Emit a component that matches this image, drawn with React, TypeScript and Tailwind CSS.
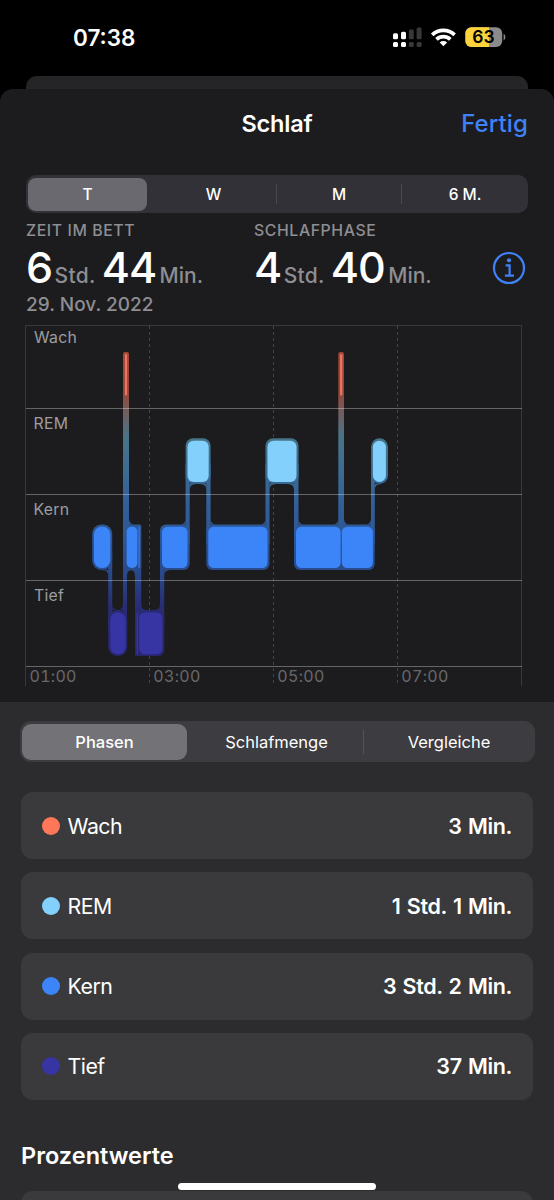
import React from "react";
import clsx from "clsx";

const blocks = [
  { x: 94, w: 16.3, y: 526.7, h: 41.3, r: 7.5, fill: "#3c85f8" },
  { x: 126.7, w: 10.6, y: 526.7, h: 41.3, r: 4.8, fill: "#3c85f8" },
  { x: 138.3, w: 1.7, y: 526.7, h: 41.3, r: 0.8, fill: "#3470d4" },
  { x: 162, w: 25.5, y: 526.7, h: 41.3, r: 5.5, fill: "#3c85f8" },
  { x: 208.3, w: 59.2, y: 526.7, h: 41.3, r: 5.5, fill: "#3c85f8" },
  { x: 296, w: 44.6, y: 526.7, h: 41.3, r: 5.5, fill: "#3c85f8" },
  { x: 341.9, w: 31, y: 526.7, h: 41.3, r: 5.5, fill: "#3c85f8" },
  { x: 187.5, w: 21.2, y: 440.7, h: 41.3, r: 6, fill: "#83d0fc" },
  { x: 267.5, w: 29, y: 440.7, h: 41.3, r: 6, fill: "#83d0fc" },
  { x: 372.9, w: 13, y: 440.7, h: 41.3, r: 6.5, fill: "#83d0fc" },
  { x: 110.3, w: 15.2, y: 612.5, h: 41.8, r: 7.2, fill: "#3734a3" },
  { x: 136.6, w: 1.4, y: 612.5, h: 41.8, r: 0.7, fill: "#3734a3" },
  { x: 139.2, w: 23.1, y: 612.5, h: 41.8, r: 5.5, fill: "#3734a3" },
  { x: 124.9, w: 2.2, y: 354, h: 41.5, r: 1, fill: "#ea7661" },
  { x: 340.1, w: 2.2, y: 354, h: 41.5, r: 1, fill: "#ea7661" },
];

// halo behind every block: x, y, width, height, radius
const halos = [
  [92.2, 524.5, 20, 45.5, 9],
  [123, 524.5, 18.3, 45.5, 2],
  [160, 524.5, 29.7, 45.5, 6],
  [206.3, 524.5, 63.2, 45.5, 6],
  [294, 524.5, 80.7, 45.5, 6],
  [185.6, 438.3, 25, 45.7, 7.5],
  [265.5, 438.3, 33, 45.7, 7.5],
  [371, 438.3, 17, 45.7, 8.5],
  [108.2, 610, 19, 46, 9],
  [135, 610, 29.2, 46, 6],
  [135, 610, 6, 46, 1],
];

// vertical bands between phases: x, top, width, bottom
const links = [
  [108.2, 550, 4, 632],
  [123, 352, 6, 550],
  [123, 540, 4, 632],
  [135, 550, 6.2, 640],
  [160, 550, 4.2, 632],
  [185.6, 462, 4.1, 545],
  [206.3, 462, 4.3, 545],
  [265.5, 462, 4, 545],
  [294, 462, 4.5, 545],
  [338.3, 352, 5.7, 545],
  [371, 462, 3.8, 545],
];

// inner corners: x, y, direction x, direction y
const fillets = [
  [108.2, 570, -1, 1],
  [112.2, 610, 1, -1],
  [123, 610, -1, -1],
  [127, 570, 0.8, 1],
  [135, 570, -0.8, 1],
  [129, 524.5, 1, -1],
  [141.2, 610, 1, -1],
  [160, 610, -1, -1],
  [164.2, 570, 1, 1],
  [185.6, 524.5, -1, -1],
  [189.7, 484, 1, 1],
  [206.3, 484, -1, 1],
  [210.6, 524.5, 1, -1],
  [265.5, 524.5, -1, -1],
  [269.5, 484, 1, 1],
  [294, 484, -1, 1],
  [298.5, 524.5, 1, -1],
  [338.3, 524.5, -1, -1],
  [344, 524.5, 1, -1],
  [371, 524.5, -1, -1],
  [374.8, 484, 1, 1],
];

const phases = [
  { name: "Wach", value: "3 Min.", dot: "bg-[#ff7759]" },
  { name: "REM", value: "1 Std. 1 Min.", dot: "bg-[#83d0fc]" },
  { name: "Kern", value: "3 Std. 2 Min.", dot: "bg-[#3c85f8]" },
  { name: "Tief", value: "37 Min.", dot: "bg-[#3734a3]" },
];

const StatusBar = () => (
  <div className="flex h-[76px] items-start justify-between pl-[73px] pr-[48px] pt-[22px]">
    <span className="text-[22.5px] font-semibold leading-8">07:38</span>
    <svg width="114" height="24" viewBox="392 25 114 24" className="mt-[3px]">
      <g fill="#fff">
        <rect x="393" y="42" width="5" height="5" rx="1.5" />
        <rect x="401" y="42" width="5" height="5" rx="1.5" />
        <rect x="393" y="33.3" width="5" height="6" rx="1.5" />
        <rect x="401" y="31.7" width="5" height="7.6" rx="1.5" />
      </g>
      <g fill="#38383a">
        <rect x="408.8" y="42" width="5" height="5" rx="1.5" />
        <rect x="416.6" y="42" width="5" height="5" rx="1.5" />
        <rect x="408.8" y="29.6" width="5" height="9.7" rx="1.5" />
        <rect x="416.6" y="27.5" width="5" height="11.8" rx="1.5" />
      </g>
      <g fill="none" stroke="#fff" strokeWidth="3.7">
        <path d="M432.2 34.9 A16 16 0 0 1 454.6 34.9" />
        <path d="M436.5 39.4 A10 10 0 0 1 450.3 39.4" />
      </g>
      <path d="M439.7 42.5 A5.4 5.4 0 0 1 447.1 42.5 L443.4 46.2 Z" fill="#fff" />
      <clipPath id="battery">
        <rect x="465.4" y="27.3" width="36.8" height="19.7" rx="6" />
      </clipPath>
      <g clipPath="url(#battery)">
        <rect x="465" y="27" width="38" height="21" fill="#8b8b8d" />
        <rect x="465" y="27" width="24" height="21" fill="#fdd33b" />
      </g>
      <path d="M503.6 33.8 Q505.4 34.8 505.4 37.2 Q505.4 39.6 503.6 40.6 Z" fill="#8b8b8d" />
      <text x="483.4" y="43.4" textAnchor="middle" fontSize="17.5" fontWeight="600" fill="#000">
        63
      </text>
    </svg>
  </div>
);

const Metric = ({ label, hours, minutes }: { label: string; hours: string; minutes: string }) => (
  <div className="w-[228px] whitespace-nowrap">
    <div className="text-[15.8px] font-medium leading-5 tracking-[0.6px] text-[#8e8e93]">{label}</div>
    <div className="flex h-[53px] items-baseline leading-[53px]">
      <span className="text-[43px] font-medium tracking-[-1px]">{hours}</span>
      <span className="ml-[2.5px] text-[21px] font-medium tracking-[0.3px] text-[#8e8e93]">Std.</span>
      <span className="ml-[6px] text-[43px] font-medium tracking-[-1px]">{minutes}</span>
      <span className="ml-[3.5px] text-[21px] font-medium text-[#8e8e93]">Min.</span>
    </div>
  </div>
);

const SleepChart = () => (
  <svg width="554" height="388" viewBox="0 314 554 388" className="block tabular-nums">
    <defs>
      <linearGradient id="phase" gradientUnits="userSpaceOnUse" x1="0" y1="352" x2="0" y2="656">
        <stop offset="0" stopColor="#a44636" />
        <stop offset="0.13" stopColor="#984538" />
        <stop offset="0.19" stopColor="#755b5b" />
        <stop offset="0.28" stopColor="#487488" />
        <stop offset="0.4" stopColor="#3c6b94" />
        <stop offset="0.5" stopColor="#325f98" />
        <stop offset="0.62" stopColor="#2c5595" />
        <stop offset="0.72" stopColor="#294a8c" />
        <stop offset="0.84" stopColor="#282c73" />
        <stop offset="1" stopColor="#29266f" />
      </linearGradient>
    </defs>
    <g stroke="#434346" strokeDasharray="3 3">
      <path d="M149.5 326V686" />
      <path d="M273.5 326V686" />
      <path d="M397.5 326V686" />
    </g>
    <path d="M25.5 686V325.5H521.5V686" fill="none" stroke="#38383b" />
    <g fill="url(#phase)">
      {halos.map(([x, y, w, h, r], i) => (
        <rect key={i} x={x} y={y} width={w} height={h} rx={r} />
      ))}
      {links.map(([x, top, w, bottom], i) => (
        <rect key={i} x={x} y={top} width={w} height={bottom - top} rx={2} />
      ))}
      {fillets.map(([x, y, dx, dy], i) => (
        <path key={i} d={`M${x} ${y}h${dx * 6}Q${x} ${y} ${x} ${y + dy * 6}Z`} />
      ))}
    </g>
    {blocks.map((b, i) => (
      <rect key={i} x={b.x} y={b.y} width={b.w} height={b.h} rx={b.r} fill={b.fill} />
    ))}
    <g stroke="#ffffff" strokeOpacity="0.32">
      <path d="M26 408.5H522" />
      <path d="M26 494.5H522" />
      <path d="M26 580.5H522" />
      <path d="M26 666.5H522" />
    </g>
    <g fill="#9c9ca1" fontSize="15.8" letterSpacing="0.25">
      <text x="34" y="342.5">Wach</text>
      <text x="33.5" y="428.5">REM</text>
      <text x="33.5" y="514.6">Kern</text>
      <text x="34" y="600.5">Tief</text>
    </g>
    <g fill="#68686b" fontSize="16" letterSpacing="0.3">
      <text x="29.5" y="682.2">01:00</text>
      <text x="153.3" y="682.2">03:00</text>
      <text x="277.3" y="682.2">05:00</text>
      <text x="401.3" y="682.2">07:00</text>
    </g>
  </svg>
);

const App = () => {
  return (
    <div className="h-[1200px] w-[554px] overflow-hidden bg-black font-['Inter',sans-serif] text-white">
      <StatusBar />
      <div className="mx-[26px] h-[13px] rounded-t-[11px] bg-[#252528]" />
      <div className="h-[1111px] rounded-t-[13px] bg-[#1c1c1e]">
        <header className="grid h-[70px] grid-cols-3 items-center px-[26px]">
          <span />
          <h1 className="text-center text-[23.5px] font-semibold tracking-[-0.2px]">Schlaf</h1>
          <button className="text-right text-[24px] font-medium tracking-[0.1px] text-[#3f82f7]">
            Fertig
          </button>
        </header>

        <div className="mx-[26px] mt-4 flex h-[38px] items-center rounded-[10px] bg-[#323137] p-[2px] text-center text-[15.5px] font-medium leading-[33px]">
          <div className="h-[33px] w-[119px] rounded-[8px] bg-[#6a696f]">T</div>
          <div className="h-[33px] w-[129px] pl-1">W</div>
          <div className="h-5 w-px bg-[#4a494f]" />
          <div className="h-[33px] w-[124px]">M</div>
          <div className="h-5 w-px bg-[#4a494f]" />
          <div className="h-[33px] flex-1 pl-[2px]">6 M.</div>
        </div>

        <div className="mx-[26px] mt-[7.5px] flex">
          <Metric label="ZEIT IM BETT" hours="6" minutes="44" />
          <Metric label="SCHLAFPHASE" hours="4" minutes="40" />
          <svg width="34" height="34" viewBox="0 0 34 34" className="ml-[10px] mt-[30.5px] shrink-0">
            <g fill="none" stroke="#3f82f7">
              <circle cx="17" cy="17" r="15" strokeWidth="2.2" />
              <path d="M13.6 14.3H17.6V24.6M12.9 24.6H22" strokeWidth="2.2" />
            </g>
            <circle cx="17" cy="9.3" r="2.1" fill="#3f82f7" />
          </svg>
        </div>
        <div className="mx-[26px] h-[20.5px] text-[19px] font-medium leading-[21px] text-[#8e8e93]">
          29. Nov. 2022
        </div>

        <SleepChart />

        <div className="h-[498px] bg-[#2c2c2e] pt-[19px]">
          <div className="ml-5 flex h-[41px] w-[515px] items-center rounded-[11px] bg-[#3d3c41] p-[2px] text-center text-[16.5px] leading-9">
            <div className="h-9 w-[165px] rounded-[9px] bg-[#737277] font-medium">Phasen</div>
            <div className="w-[176px] pl-[3px]">Schlafmenge</div>
            <div className="h-6 w-px bg-[#545358]" />
            <div className="flex-1 pl-px">Vergleiche</div>
          </div>

          <div className="mx-[21px] mt-[30px] flex flex-col gap-[13.3px]">
            {phases.map((phase) => (
              <div
                key={phase.name}
                className="flex h-[67px] items-center rounded-[12px] bg-[#3a3a3c] px-[21px] text-[21.5px] leading-7"
              >
                <span className={clsx("mr-[7.5px] size-[18px] rounded-full", phase.dot)} />
                <span className="text-[21.3px] tracking-[-0.5px]">{phase.name}</span>
                <span className="ml-auto font-semibold tracking-[-0.35px] [word-spacing:1.2px]">
                  {phase.value}
                </span>
              </div>
            ))}
          </div>

          <h2 className="ml-[21px] mt-[42px] text-[23.5px] font-semibold leading-7">
            Prozentwerte
          </h2>
          <div className="mx-auto mt-[13px] h-[7px] w-[198px] rounded-full bg-white" />
          <div className="mx-[21px] mt-px h-5 rounded-t-[12px] bg-[#3a3a3c]" />
        </div>
      </div>
    </div>
  );
};

export default App;
